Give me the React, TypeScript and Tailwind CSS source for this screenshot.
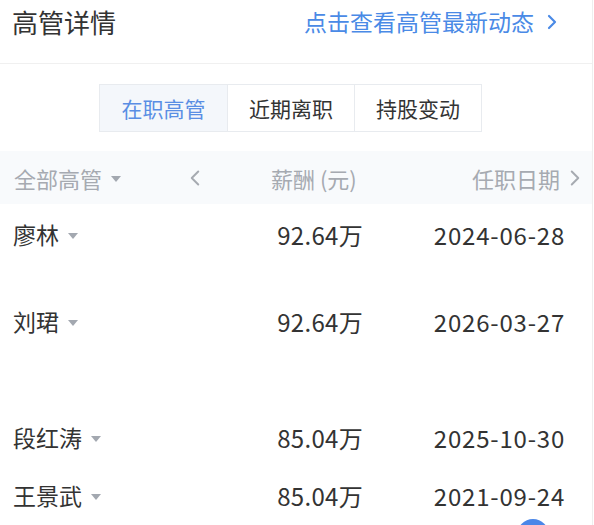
import { ChevronLeft, ChevronRight } from 'lucide-react';

const rows = [
  { name: '廖林', pay: '92.64万', date: '2024-06-28', h: 'h-[87px]' },
  { name: '刘珺', pay: '92.64万', date: '2026-03-27', h: 'h-[116px]' },
  { name: '段红涛', pay: '85.04万', date: '2025-10-30', h: 'h-[58px]' },
  { name: '王景武', pay: '85.04万', date: '2021-09-24', h: 'h-[58px]' },
];

function Caret() {
  return (
    <svg width="12" height="8" viewBox="0 0 12 8" className="ml-2 mt-[2px]">
      <path d="M1 1h10L6 7z" fill="#a3a8b0" />
    </svg>
  );
}

export default function App() {
  return (
    <div
      className="relative w-[593px] h-[525px] overflow-hidden bg-white border-r border-[#eeeeee] text-[#333]"
      style={{ fontFamily: '"Noto Sans CJK SC", "Noto Sans", sans-serif' }}
    >
      {/* header */}
      <div className="flex items-center justify-between h-[64px] pl-[12px] pr-[28px] pb-[20px] border-b border-[#f0f0f0]">
        <h1 className="text-[26px] leading-none">高管详情</h1>
        <div className="flex items-center text-[23px] leading-none text-[#4a8ae6]">
          点击查看高管最新动态
          <ChevronRight className="ml-[6px] w-[24px] h-[24px]" strokeWidth={2.2} />
        </div>
      </div>

      {/* tabs */}
      <div className="flex justify-start pl-[99px] pt-[20px]">
        <div className="flex border border-[#e8ebef] text-[21px] leading-none">
          <div className="w-[127px] h-[46px] flex items-center justify-center bg-[#f4f7fb] text-[#5a8ee4]">在职高管</div>
          <div className="w-[127px] h-[46px] flex items-center justify-center border-l border-[#e8ebef]">近期离职</div>
          <div className="w-[127px] h-[46px] flex items-center justify-center border-l border-[#e8ebef]">持股变动</div>
        </div>
      </div>

      {/* table head */}
      <div className="mt-[19px] h-[53px] bg-[#f8fafc] flex items-center text-[22px] leading-none text-[#a6aab1] pl-[14px] pr-[4px]">
        <div className="flex items-center w-[168px]">
          全部高管
          <Caret />
        </div>
        <ChevronLeft className="w-[26px] h-[26px]" strokeWidth={1.8} />
        <div className="ml-[63px] w-[130px] whitespace-pre">薪酬 (元)</div>
        <div className="ml-auto flex items-center">
          任职日期
          <ChevronRight className="ml-[2px] w-[26px] h-[26px]" strokeWidth={1.8} />
        </div>
      </div>

      {/* rows */}
      <div className="pt-[11px]">
        {rows.map((r) => (
          <div key={r.name} className={`flex items-start ${r.h} text-[23px] leading-none pl-[13px] pr-[27px]`}>
            <div className="flex items-center w-[200px] pt-[8px]">
              {r.name}
              <Caret />
            </div>
            <div className="w-[150px] text-right pt-[8px] text-[24px] tracking-[0.3px]">{r.pay}</div>
            <div className="ml-auto pt-[8px] text-[24px] tracking-[0.8px]">{r.date}</div>
          </div>
        ))}
      </div>

      <div className="absolute left-[517px] top-[519px] w-[32px] h-[32px] rounded-full bg-[#4a86e8]" />
    </div>
  );
}
